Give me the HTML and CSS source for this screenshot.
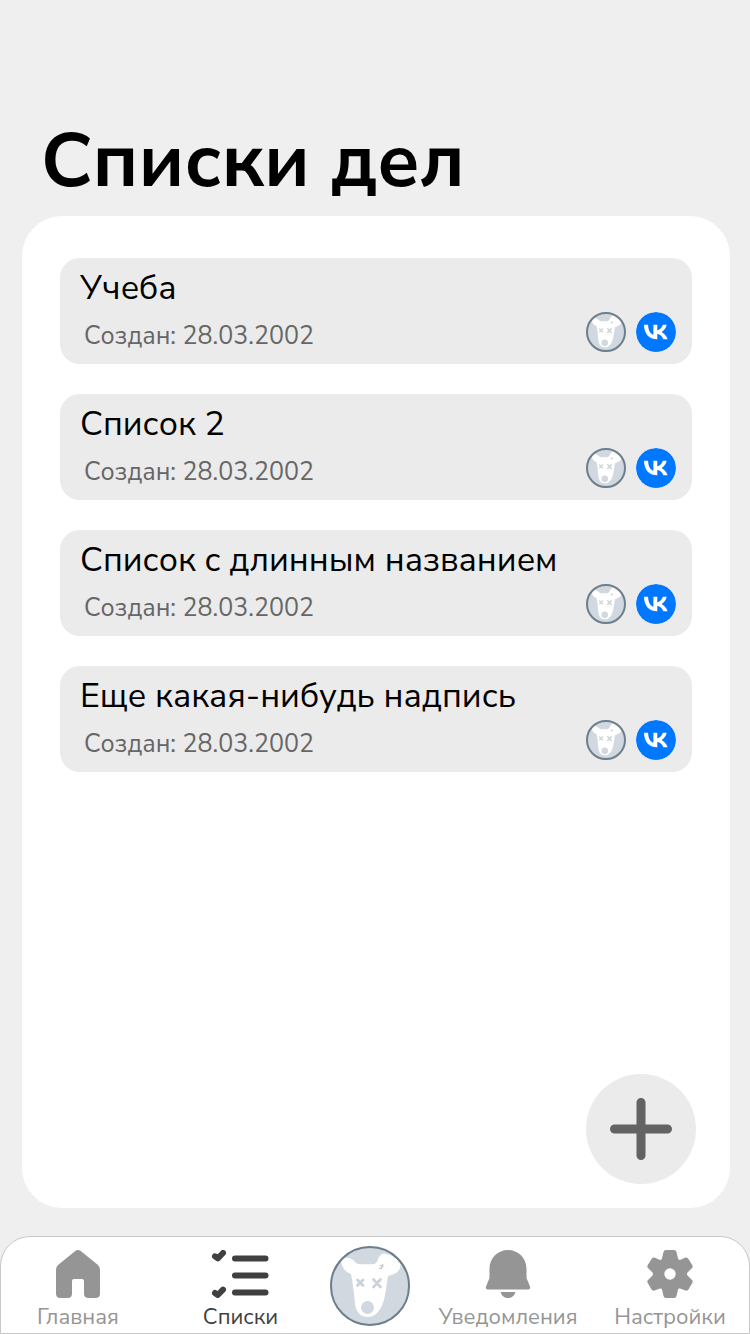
FILE: index.html
```html
<!DOCTYPE html>
<html lang="ru">
<head>
<meta charset="utf-8">
<meta name="viewport" content="width=device-width, initial-scale=1">
<title>Списки дел</title>
<link rel="stylesheet" href="styles.css">
</head>
<body>
<svg class="sprite" aria-hidden="true">
  <symbol id="dog" viewBox="0 0 80 80">
    <circle cx="40" cy="40" r="40" fill="#d1d8e0"/>
    <path fill="#fff" d="M12 12C16 11 21 11 25 16Q27 18.300 30 18.300H43Q46.500 18.300 48.500 12Q51 6 57 8Q65 10 70 17Q72 23 66 27Q62 29 58 30C57 36 56 46 54 54Q49 70.500 38 71Q27 71 25 58C24 48 23 37 21 28Q14 26 12 19Q10 14 12 12Z"/>
    <circle cx="37.500" cy="61.500" r="6.500" fill="#d1d8e0"/>
    <path fill="none" stroke="#cbd2da" stroke-width="2.800" stroke-linecap="round" d="M27.500 34l5.500 5.500M33 34l-5.500 5.500M43.500 33.500l7 7.500M50.500 33.500l-7 7.500"/>
    <path fill="none" stroke="#c3c7cc" stroke-width="1.200" d="M53 18l-2 5M49.500 19.500l4 1M49 22l2.500 1"/>
  </symbol>
  <symbol id="vk" viewBox="0 0 40 40">
    <circle cx="20" cy="20" r="20" fill="#07f"/>
    <path fill="#fff" d="M21 27.300C12.900 27.300 8.200 21.700 8 12.700H12.100C12.200 19.300 15.100 22.100 17.400 22.700V12.700H21.300V18.400C23.600 18.100 26 15.500 26.900 12.700H30.700C30.100 16.300 27.400 18.900 25.500 20C27.400 20.900 30.400 23.200 31.600 27.300H27.400C26.500 24.400 24.300 22.300 21.300 22V27.300Z"/>
  </symbol>
</svg>
<div class="screen">
  <h1 class="title">Списки дел</h1>
  <main class="panel">
    <ul class="lists">
      <li class="card">
        <h2 class="card-title">Учеба</h2>
        <p class="card-date">Создан: 28.03.2002</p>
        <div class="members"><svg class="avatar"><use href="#dog"/></svg><svg class="member"><use href="#vk"/></svg></div>
      </li>
      <li class="card">
        <h2 class="card-title">Список 2</h2>
        <p class="card-date">Создан: 28.03.2002</p>
        <div class="members"><svg class="avatar"><use href="#dog"/></svg><svg class="member"><use href="#vk"/></svg></div>
      </li>
      <li class="card">
        <h2 class="card-title">Список с длинным названием</h2>
        <p class="card-date">Создан: 28.03.2002</p>
        <div class="members"><svg class="avatar"><use href="#dog"/></svg><svg class="member"><use href="#vk"/></svg></div>
      </li>
      <li class="card">
        <h2 class="card-title">Еще какая-нибудь надпись</h2>
        <p class="card-date">Создан: 28.03.2002</p>
        <div class="members"><svg class="avatar"><use href="#dog"/></svg><svg class="member"><use href="#vk"/></svg></div>
      </li>
    </ul>
    <button class="add" type="button" aria-label="Добавить список">
      <svg class="add-icon" viewBox="0 0 62 62"><path d="M31 4.500V57.500M4.500 31H57.500" stroke="#636363" stroke-width="9" stroke-linecap="round"/></svg>
    </button>
  </main>
  <nav class="tabs">
    <a class="tab" href="#home">
      <svg class="tab-icon" viewBox="0 0 60 48" fill="#959595"><path d="M27 1.200Q30 -1 33 1.200L50 15Q52 17 52 19.500V43.500Q52 48 47.500 48H40.500Q36 48 36 43.500V31Q36 29 34 29H26Q24 29 24 31V43.500Q24 48 19.500 48H12.500Q8 48 8 43.500V19.500Q8 17 10 15Z"/></svg>
      <span>Главная</span>
    </a>
    <a class="tab tab-active" href="#lists" aria-current="page">
      <svg class="tab-icon" viewBox="0 0 60 48" fill="none" stroke="#404040" stroke-linecap="round" stroke-linejoin="round"><path stroke-width="6" d="M24 8.500H54.500M24 25.500H54.500M24 42.500H54.500M4 6.300L6.800 8.300L12 3M4 43L6.800 45L12 39.700"/></svg>
      <span>Списки</span>
    </a>
    <a class="profile" href="#profile" aria-label="Профиль"><svg class="avatar avatar-large"><use href="#dog"/></svg></a>
    <a class="tab" href="#notifications">
      <svg class="tab-icon" viewBox="0 0 60 48" fill="#959595"><path d="M11.500 18.500C11.500 8 20 0 30 0S48.500 8 48.500 18.500V28L52 36.500Q53 39.500 50 39.500H10Q7 39.500 8 36.500L11.500 28ZM22.500 42H37.500Q35.500 48 30 48T22.500 42Z"/></svg>
      <span>Уведомления</span>
    </a>
    <a class="tab" href="#settings">
      <svg class="tab-icon" viewBox="0 0 60 48" fill="#959595"><path fill-rule="evenodd" d="M26 0H34Q36 0 36.500 2L38 8.500Q38.500 10 40 10L45.500 7.500Q47.500 7 48.500 9L52.500 15.500Q53 17 52 18L47.500 22.500Q46.500 24 47.500 25.500L52 30Q53 31 52.500 32.500L48.500 39.500Q47.500 41 45.500 40.500L40 38.500Q38.500 38 38 39.500L36.500 46Q36 48 34 48H26Q24 48 23.500 46L22 39.500Q21.500 38 20 38.500L14.500 40.500Q12.500 41 11.500 39.500L7.500 32.500Q7 31 8 30L12.500 25.500Q13.500 24 12.500 22.500L8 18Q7 17 7.500 15.500L11.500 9Q12.500 7 14.500 7.500L20 10Q21.500 10 22 8.500L23.500 2Q24 0 26 0ZM30 18.300A5.700 5.700 0 1 0 30 29.700A5.700 5.700 0 1 0 30 18.300Z"/></svg>
      <span>Настройки</span>
    </a>
  </nav>
</div>
</body>
</html>
```
FILE: styles.css
```css
* { box-sizing: border-box; }
body {
  margin: 0;
  background: #efefef;
  color: #000;
  font-family: "Nunito Sans", Nunito, "Noto Sans", sans-serif;
}
.sprite { position: absolute; width: 0; height: 0; }
.screen { min-height: 100vh; display: flex; flex-direction: column; }
.title {
  margin: 0;
  padding: 111px 41px 5px;
  font-size: 76px;
  line-height: 100px;
  font-weight: 700;
}
.panel {
  flex: 1;
  display: flex;
  flex-direction: column;
  justify-content: space-between;
  margin: 0 20px 28px 22px;
  padding: 42px 38px 24px;
  border-radius: 40px;
  background: #fff;
}
.lists { display: grid; gap: 30px; margin: 0; padding: 0; list-style: none; }
.card {
  display: grid;
  grid-template-columns: 1fr auto;
  padding: 8px 16px 12px 20px;
  border-radius: 20px;
  background: #ebebeb;
}
.card-title {
  grid-column: 1 / -1;
  margin: 0;
  font-size: 34px;
  line-height: 44px;
  font-weight: 400;
}
.card-date {
  margin: 0;
  padding: 10px 4px 0;
  color: #666;
  font-size: 25px;
  line-height: 32px;
}
.members { display: flex; align-items: flex-end; gap: 10px; }
.avatar, .member { width: 40px; height: 40px; border-radius: 50%; }
.avatar { outline: 2px solid #6d7f8c; outline-offset: -2px; }
.avatar-large { width: 80px; height: 80px; }
.add {
  display: grid;
  place-items: center;
  align-self: flex-end;
  width: 110px;
  height: 110px;
  margin: 30px -4px 0 0;
  padding: 0;
  border: 0;
  border-radius: 50%;
  background: #ebebeb;
}
.add-icon { width: 62px; height: 62px; }
.tabs {
  display: grid;
  grid-template-columns: 154fr 171fr 88fr 188fr 136fr;
  padding: 9px 11px 2px 0;
  border: 1px solid #c8c8c8;
  border-radius: 30px 30px 0 0;
  background: #fff;
}
.tab {
  display: flex;
  flex-direction: column;
  align-items: center;
  padding-top: 4px;
  gap: 5px;
  color: #959595;
  font-size: 22px;
  line-height: 28px;
  text-decoration: none;
}
.tab-active { color: #404040; }
.tab-icon { width: 60px; height: 48px; }
.profile { display: flex; justify-content: center; align-items: flex-start; }
```
